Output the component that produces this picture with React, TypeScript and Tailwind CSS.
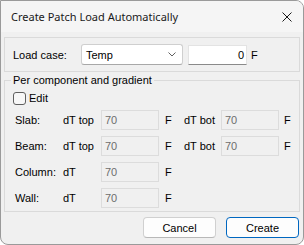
import React from "react";

type Row = {
  label: string;
  first: string;
  second?: string;
};

const rows: Row[] = [
  { label: "Slab:", first: "dT top", second: "dT bot" },
  { label: "Beam:", first: "dT top", second: "dT bot" },
  { label: "Column:", first: "dT" },
  { label: "Wall:", first: "dT" },
];

function DisabledBox({ value }: { value: string }) {
  return (
    <div className="w-[58px] h-[20px] border border-[#dcdcdc] bg-[#f0f0f0] pl-[3px] flex items-center text-[#6d6d6d]">
      {value}
    </div>
  );
}

export default function App() {
  return (
    <div
      className="w-[304px] h-[245px] bg-[#f0f0f0] border border-[#9a9a9a] rounded-tr-[8px] rounded-b-[8px] overflow-hidden text-[11px] leading-[16px] text-black flex flex-col"
      style={{ fontFamily: '"Liberation Sans", Arial, sans-serif' }}
    >
      {/* title bar */}
      <div className="h-[31px] shrink-0 bg-[#f5f5f5] flex items-center justify-between pl-[10px] pr-[10px]">
        <span className="text-[#1a1a1a] text-[11px] font-['Noto_Sans',sans-serif]">Create Patch Load Automatically</span>
        <svg width="10" height="10" viewBox="0 0 10 10" className="mr-[1px]">
          <path d="M0.5 0.5 L9.5 9.5 M9.5 0.5 L0.5 9.5" stroke="#1a1a1a" strokeWidth="1" />
        </svg>
      </div>

      <div className="px-[3px] flex flex-col">
        {/* load case group */}
        <div className="mt-[5px] h-[35px] border border-[#dadada] flex items-center pl-[8px]">
          <span className="w-[68px]">Load case:</span>
          <div className="w-[102px] h-[21px] bg-white border border-[#cfcfcf] border-b-[#a8a8a8] rounded-[3px] flex items-center justify-between pl-[4px] pr-[6px]">
            <span>Temp</span>
            <svg width="8" height="5" viewBox="0 0 8 5">
              <path d="M0.5 0.5 L4 4 L7.5 0.5" fill="none" stroke="#606060" strokeWidth="1" />
            </svg>
          </div>
          <div className="ml-[5px] w-[59px] h-[20px] bg-white border border-[#e3e3e3] border-b-[#8a8a8a] flex items-center justify-end pr-[2px]">
            0
          </div>
          <span className="ml-[4px]">F</span>
        </div>

        {/* per component group */}
        <fieldset className="border border-[#dadada] pb-[3px]">
          <legend className="ml-[6px] px-[2px]">Per component and gradient</legend>
          <label className="mt-[2px] ml-[8px] h-[16px] flex items-center gap-[3px]">
            <span className="w-[13px] h-[13px] border border-[#5f5f5f] rounded-[3px] bg-[#f7f7f7]" />
            <span>Edit</span>
          </label>
          <div className="mt-[4px] flex flex-col gap-[6px] pl-[10px]">
            {rows.map((row) => (
              <div key={row.label} className="h-[20px] flex items-center">
                <span className="w-[48px]">{row.label}</span>
                <span className="w-[38px]">{row.first}</span>
                <DisabledBox value="70" />
                <span className="ml-[6px] w-[19px]">F</span>
                {row.second && (
                  <>
                    <span className="w-[37px]">{row.second}</span>
                    <DisabledBox value="70" />
                    <span className="ml-[5px]">F</span>
                  </>
                )}
              </div>
            ))}
          </div>
        </fieldset>

        {/* buttons */}
        <div className="mt-[5px] flex justify-end gap-[10px] pr-[1px]">
          <button className="w-[73px] h-[21px] bg-[#fdfdfd] border border-[#d0d0d0] border-b-[#b8b8b8] rounded-[4px] flex items-center justify-center">
            Cancel
          </button>
          <button className="w-[73px] h-[21px] bg-[#fdfdfd] border border-[#0067c0] rounded-[4px] flex items-center justify-center">
            Create
          </button>
        </div>
      </div>
    </div>
  );
}
